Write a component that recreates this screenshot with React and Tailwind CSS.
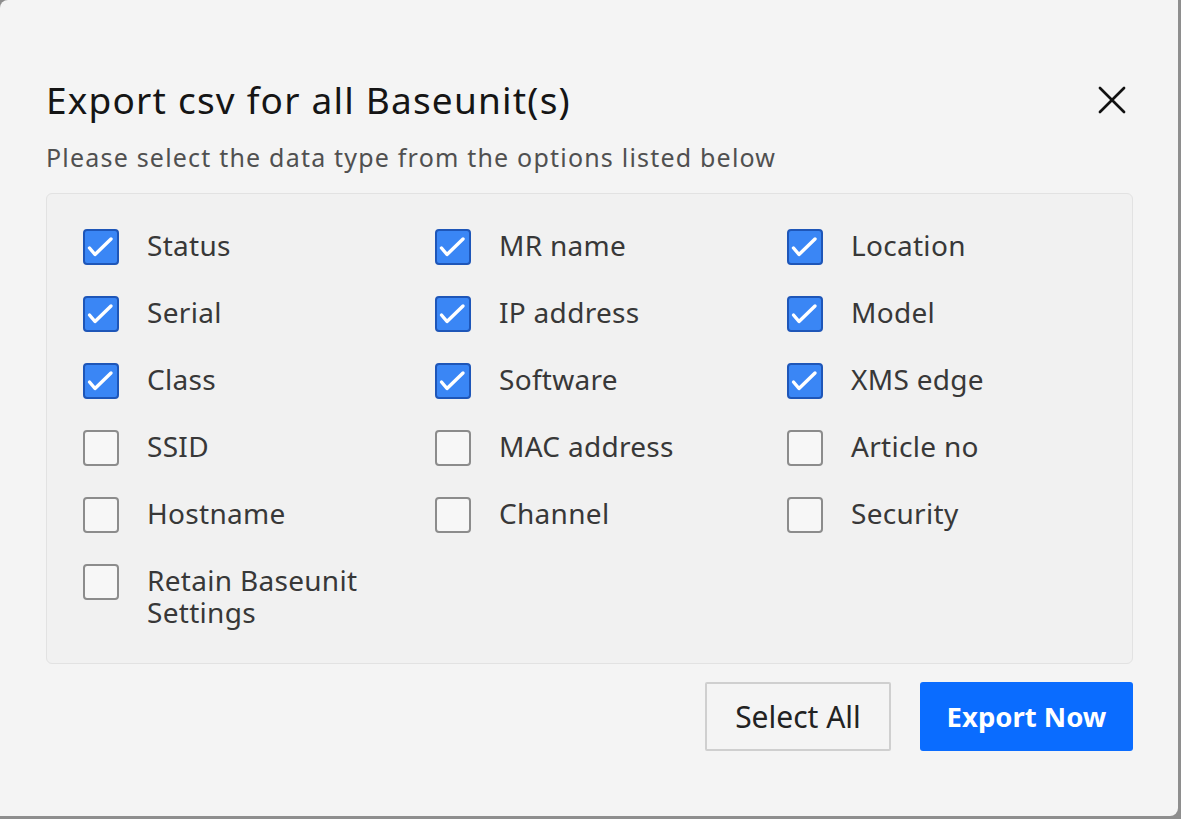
import React, { useState } from "react";

const OPTIONS = [
  ["Status", true],
  ["MR name", true],
  ["Location", true],
  ["Serial", true],
  ["IP address", true],
  ["Model", true],
  ["Class", true],
  ["Software", true],
  ["XMS edge", true],
  ["SSID", false],
  ["MAC address", false],
  ["Article no", false],
  ["Hostname", false],
  ["Channel", false],
  ["Security", false],
  ["Retain Baseunit Settings", false],
];

function Checkbox({ checked }) {
  if (checked) {
    return (
      <span className="flex h-[36px] w-[36px] shrink-0 items-center justify-center rounded-[4px] border-2 border-[#1e56b8] bg-[#3a86f5]">
        <svg viewBox="0 0 32 32" className="h-[32px] w-[32px]" fill="none">
          <path
            d="M4.5 17l5.5 6.5L26 8"
            stroke="white"
            strokeWidth="3.4"
            strokeLinecap="round"
            strokeLinejoin="round"
          />
        </svg>
      </span>
    );
  }
  return (
    <span className="h-[36px] w-[36px] shrink-0 rounded-[4px] border-2 border-[#8c8c8c] bg-[#f7f7f7]" />
  );
}

export default function App() {
  const [opts, setOpts] = useState(OPTIONS);

  const toggle = (i) =>
    setOpts((prev) => prev.map((o, j) => (j === i ? [o[0], !o[1]] : o)));

  return (
    <div
      className="h-[819px] w-[1181px] bg-[#8e8e8e]"
      style={{ fontFamily: '"Noto Sans", "Open Sans", sans-serif' }}
    >
      <div className="flex h-[816px] w-[1178px] flex-col rounded-br-[8px] rounded-tl-[8px] bg-[#f4f4f4] pl-[46px] pr-[45px] pt-[76px]">
        {/* Header */}
        <div className="flex items-center justify-between">
          <h1 className="text-[37px] leading-[48px] font-normal tracking-[1.2px] text-[#151515]">
            Export csv for all Baseunit(s)
          </h1>
          <button className="mr-[4px] flex h-[34px] w-[34px] items-center justify-center">
            <svg viewBox="0 0 24 24" className="h-[34px] w-[34px]" fill="none">
              <path
                d="M3.5 3.5l17 17M20.5 3.5l-17 17"
                stroke="#111"
                strokeWidth="1.9"
                strokeLinecap="round"
              />
            </svg>
          </button>
        </div>
        <p className="mt-[17px] text-[25px] leading-[32px] tracking-[1.2px] text-[#505050]">
          Please select the data type from the options listed below
        </p>

        {/* Options panel */}
        <div className="mt-[20px] rounded-[6px] border border-[#e2e2e2] bg-[#f1f1f1] pb-[35px] pl-[36px] pt-[35px]">
          <div className="grid grid-cols-[352px_352px_1fr] gap-y-[31px]">
            {opts.map(([label, checked], i) => (
              <label
                key={label}
                onClick={() => toggle(i)}
                className="flex cursor-pointer items-start gap-[28px]"
              >
                <Checkbox checked={checked} />
                <span className="w-[240px] text-[28px] leading-[32px] tracking-[0.3px] text-[#383838]">
                  {label}
                </span>
              </label>
            ))}
          </div>
        </div>

        {/* Footer */}
        <div className="mt-[18px] flex justify-end gap-[29px]">
          <button className="h-[69px] w-[186px] rounded-[2px] border-2 border-[#cfcfcf] bg-[#f4f4f4] text-[30px] text-[#222]">
            Select All
          </button>
          <button className="h-[69px] w-[213px] rounded-[3px] bg-[#0a6cff] text-[27.5px] font-bold text-white">
            Export Now
          </button>
        </div>
      </div>
    </div>
  );
}
